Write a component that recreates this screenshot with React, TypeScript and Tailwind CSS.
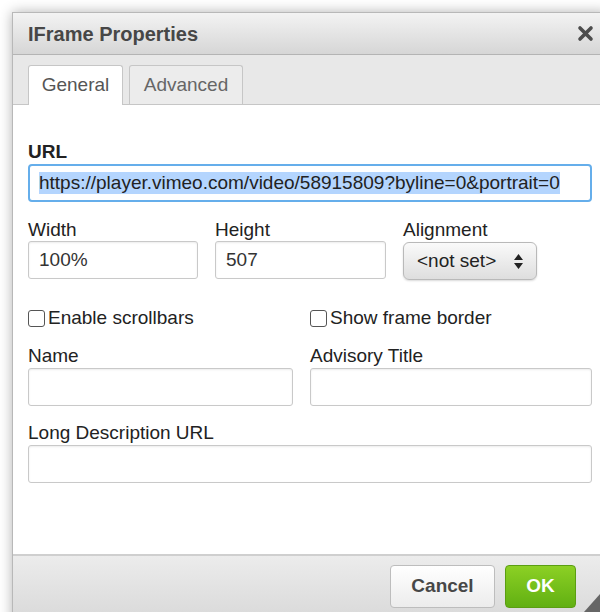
const font = { fontFamily: '"Liberation Sans", Arial, sans-serif' };

const inputClass =
  "h-[38px] rounded-[3px] border border-[#c9c9c9] bg-white px-[10px] text-[19px] text-[#333] shadow-[inset_0_1px_2px_rgba(0,0,0,0.08)] outline-none";

const Label = ({ children, bold }: { children: React.ReactNode; bold?: boolean }) => (
  <div
    className={`h-[22px] text-[19px] leading-[22px] text-[#222] ${bold ? "font-bold" : ""}`}
  >
    {children}
  </div>
);

const Checkbox = ({ label }: { label: string }) => (
  <label className="flex items-center gap-[3px] text-[19px] leading-[22px] text-[#222]">
    <span className="h-[17px] w-[17px] rounded-[3px] border border-[#555] bg-white" />
    {label}
  </label>
);

const App = () => {
  return (
    <div
      className="relative h-[612px] w-[600px] overflow-hidden bg-white pl-[12px] pt-[12px]"
      style={font}
    >
      <div className="flex h-[629px] w-[596px] flex-col border border-[#b8b8b8] bg-white shadow-[0_0_12px_rgba(0,0,0,0.3)]">
        {/* Title bar */}
        <div className="flex h-[42px] shrink-0 items-center justify-between border-b border-[#b4b4b4] bg-gradient-to-b from-[#f3f3f3] to-[#d6d6d6] pl-[15px] pr-[13px]">
          <span className="text-[20px] font-bold text-[#474747]">IFrame Properties</span>
          <svg width="17" height="17" viewBox="0 0 17 17">
            <path
              d="M3 3 L14 14 M14 3 L3 14"
              stroke="#4d4d4d"
              strokeWidth="3.6"
              strokeLinecap="round"
            />
          </svg>
        </div>

        {/* Tabs */}
        <div className="flex h-[50px] shrink-0 items-end gap-[6px] border-b border-[#c6c6c6] bg-[#e8e8e8] pl-[15px]">
          <div className="-mb-px flex h-[40px] w-[95px] items-center justify-center rounded-t-[3px] border border-b-0 border-[#c6c6c6] bg-white text-[19px] text-[#555]">
            General
          </div>
          <div className="flex h-[39px] w-[114px] items-center justify-center rounded-t-[3px] border border-b-0 border-[#c6c6c6] bg-[#ececec] text-[19px] text-[#666]">
            Advanced
          </div>
        </div>

        {/* Form body */}
        <div className="flex flex-1 flex-col px-[15px] pt-[36px]">
          <Label bold>URL</Label>
          <div className="mt-px flex h-[38px] w-[564px] items-center rounded-[4px] border-2 border-[#65aeeb] bg-white px-[9px] text-[19px] text-[#222]">
            <span className="bg-[#b4d5fe] leading-[22px]">
              https://player.vimeo.com/video/58915809?byline=0&amp;portrait=0
            </span>
          </div>

          <div className="mt-[17px] flex gap-[17px]">
            <div className="flex flex-col">
              <Label>Width</Label>
              <input className={`${inputClass} w-[170px]`} style={font} defaultValue="100%" />
            </div>
            <div className="flex flex-col">
              <Label>Height</Label>
              <input className={`${inputClass} w-[171px]`} style={font} defaultValue="507" />
            </div>
            <div className="flex flex-col">
              <Label>Alignment</Label>
              <div className="mt-px flex h-[38px] w-[134px] items-center justify-between rounded-[6px] border border-[#b9b9b9] bg-gradient-to-b from-[#fafafa] to-[#dedede] pl-[13px] pr-[13px] text-[19px] text-[#222] shadow-[0_1px_2px_rgba(0,0,0,0.15)]">
                &lt;not set&gt;
                <svg width="9" height="15" viewBox="0 0 9 15">
                  <path d="M4.5 0 L9 6 L0 6 Z M0 9 L9 9 L4.5 15 Z" fill="#222" />
                </svg>
              </div>
            </div>
          </div>

          <div className="mt-[27px] flex">
            <div className="w-[282px]">
              <Checkbox label="Enable scrollbars" />
            </div>
            <Checkbox label="Show frame border" />
          </div>

          <div className="mt-[16px] flex gap-[17px]">
            <div className="flex flex-col">
              <Label>Name</Label>
              <input className={`${inputClass} mt-px w-[265px]`} style={font} />
            </div>
            <div className="flex flex-col">
              <Label>Advisory Title</Label>
              <input className={`${inputClass} mt-px w-[282px]`} style={font} />
            </div>
          </div>

          <div className="mt-[16px] flex flex-col">
            <Label>Long Description URL</Label>
            <input className={`${inputClass} mt-px w-[564px]`} style={font} />
          </div>
        </div>

        {/* Footer */}
        <div className="relative h-[86px] shrink-0 border-t-2 border-[#cfcfcf] bg-gradient-to-b from-[#ececec] to-[#d3d3d3]">
          <div className="flex justify-end gap-[10px] pr-[31px] pt-[9px]">
            <button className="flex h-[43px] w-[105px] items-center justify-center rounded-[4px] border border-[#bdbdbd] bg-gradient-to-b from-white to-[#ececec] text-[19px] font-bold text-[#474747]">
              Cancel
            </button>
            <button className="flex h-[43px] w-[71px] items-center justify-center rounded-[4px] border border-[#5b9e12] bg-gradient-to-b from-[#8cd024] to-[#61b012] text-[19px] font-bold text-white">
              OK
            </button>
          </div>
        </div>
      </div>
      {/* resize grip */}
      <svg className="absolute left-[584px] top-[594px]" width="16" height="18" viewBox="0 0 16 18">
        <path d="M16 0 L16 18 L0 18 Z" fill="#666" />
      </svg>
    </div>
  );
};

export default App;
